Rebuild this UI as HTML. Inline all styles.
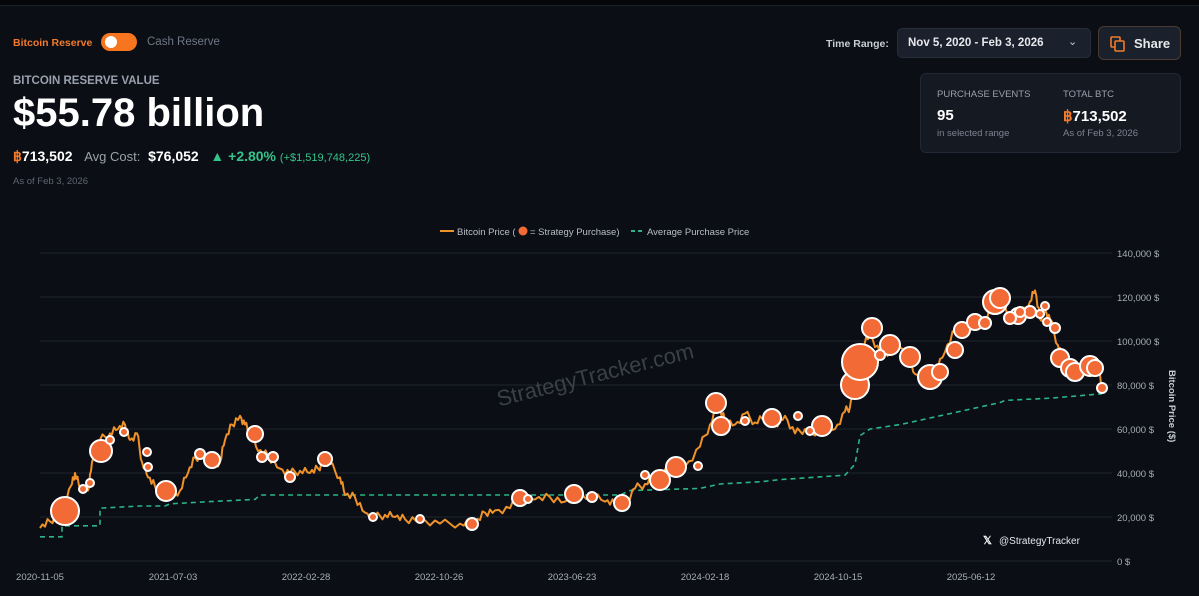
<!DOCTYPE html>
<html><head><meta charset="utf-8">
<style>
*{margin:0;padding:0;box-sizing:border-box}
body{width:1199px;height:596px;background:#0b0e15;font-family:"Liberation Sans",sans-serif;color:#fff;position:relative;overflow:hidden}
.topline{position:absolute;left:0;top:0;width:1199px;height:6px;background:#05070b;border-bottom:1px solid #1c212b}
.abs{position:absolute;white-space:nowrap}
.tog{position:absolute;left:101px;top:33px;width:36px;height:18px;border-radius:9px;background:#f7751f}
.tog:after{content:"";position:absolute;left:4px;top:3px;width:12px;height:12px;border-radius:50%;background:#fff}
.sel{position:absolute;left:897px;top:28px;width:194px;height:30px;border-radius:5px;background:#1b212c;border:1px solid #262d39}
.share{position:absolute;left:1098px;top:26px;width:83px;height:34px;border-radius:6px;background:#1b212c;border:1px solid #4a3a30}
.card{position:absolute;left:920px;top:73px;width:261px;height:80px;border-radius:6px;background:#141922;border:1px solid #222834}
</style></head><body>
<div class="topline"></div>
<div class="abs" style="left:13px;top:37px;font-size:10.5px;color:#f27a2a;font-weight:bold">Bitcoin Reserve</div>
<div class="tog"></div>
<div class="abs" style="left:147px;top:36px;font-size:11.5px;color:#6f7785">Cash Reserve</div>
<div class="abs" style="left:13px;top:75px;font-size:11.5px;color:#9aa1ad;font-weight:bold">BITCOIN RESERVE VALUE</div>
<div class="abs" style="left:13px;top:91px;font-size:40px;font-weight:bold;color:#fff">$55.78 billion</div>
<div class="abs" style="left:13px;top:148px;font-size:14px"><span style="color:#f27a2a;font-weight:bold">฿</span><b>713,502</b>&nbsp;&nbsp;&nbsp;<span style="color:#9aa1ad;font-size:13px">Avg Cost:</span>&nbsp;&nbsp;<b>$76,052</b>&nbsp;&nbsp;&nbsp;<b style="color:#34c48a">▲ +2.80%</b> <span style="color:#34c48a;font-size:11px">(+$1,519,748,225)</span></div>
<div class="abs" style="left:13px;top:176px;font-size:9.5px;color:#5f6673">As of Feb 3, 2026</div>

<div class="abs" style="left:826px;top:38px;font-size:10.5px;color:#c8ccd3;font-weight:bold">Time Range:</div>
<div class="sel"><div class="abs" style="left:10px;top:8px;font-size:11.5px;color:#e6e8ec;font-weight:bold">Nov 5, 2020 - Feb 3, 2026</div><div class="abs" style="left:170px;top:6px;font-size:11px;color:#c8ccd3">⌄</div></div>
<div class="share">
<svg class="abs" style="left:11px;top:9px" width="16" height="16" viewBox="0 0 16 16" fill="none" stroke="#f27a2a" stroke-width="1.6"><rect x="1" y="1" width="9" height="10" rx="1"/><rect x="5" y="5" width="9" height="10" rx="1" fill="#1b212c"/></svg>
<div class="abs" style="left:35px;top:9px;font-size:13px;font-weight:bold;color:#e6e8ec">Share</div></div>
<div class="card">
<div class="abs" style="left:16px;top:15px;font-size:9.5px;color:#9aa1ad">PURCHASE EVENTS</div>
<div class="abs" style="left:16px;top:33px;font-size:15px;font-weight:bold">95</div>
<div class="abs" style="left:16px;top:54px;font-size:9.5px;color:#7d8491">in selected range</div>
<div class="abs" style="left:142px;top:15px;font-size:9.5px;color:#9aa1ad">TOTAL BTC</div>
<div class="abs" style="left:142px;top:33px;font-size:15px;font-weight:bold"><span style="color:#f27a2a">฿</span>713,502</div>
<div class="abs" style="left:142px;top:54px;font-size:9.5px;color:#7d8491">As of Feb 3, 2026</div>
</div>

<svg id="ch" class="abs" style="left:0;top:0" width="1199" height="596" font-family="Liberation Sans, sans-serif"></svg>
<script>
var s='';
var Y=function(p){return 561-p*2.2};
s+='<line x1="440" y1="231" x2="454" y2="231" stroke="#f0922a" stroke-width="2"/><text x="457" y="235" font-size="9.5" fill="#b8bec8">Bitcoin Price (</text><circle cx="523" cy="231" r="4.5" fill="#f26a35"/><text x="530" y="235" font-size="9.5" fill="#b8bec8">= Strategy Purchase)</text><line x1="631" y1="231" x2="644" y2="231" stroke="#2bb587" stroke-width="2" stroke-dasharray="4,3"/><text x="647" y="235" font-size="9.5" fill="#b8bec8">Average Purchase Price</text>';
var labs=['0 $','20,000 $','40,000 $','60,000 $','80,000 $','100,000 $','120,000 $','140,000 $'];
for(var i=0;i<8;i++){var y=561-i*44;s+='<line x1="40" y1="'+y+'" x2="1112" y2="'+y+'" stroke="#1f2430" stroke-width="1"/><text x="1117" y="'+(y+4)+'" font-size="9.5" fill="#a8aeb8">'+labs[i]+'</text>';}
s+='<text transform="translate(1169,370) rotate(90)" font-size="9.5" fill="#c8ccd3" font-weight="bold">Bitcoin Price ($)</text>';
var dl=['2020-11-05','2021-07-03','2022-02-28','2022-10-26','2023-06-23','2024-02-18','2024-10-15','2025-06-12'];
for(i=0;i<8;i++){s+='<text x="'+(40+i*133)+'" y="580" text-anchor="middle" font-size="9.5" fill="#a8aeb8">'+dl[i]+'</text>';}
s+='<text transform="translate(597,382) rotate(-14)" text-anchor="middle" font-size="22" fill="#3a3f48">StrategyTracker.com</text>';
s+='<text x="983" y="544" font-size="11" fill="#fff" font-weight="bold">𝕏</text><text x="999" y="544" font-size="10" fill="#e6e8ec">@StrategyTracker</text>';
var avg=[[40,11],[62,11],[62,16],[100,16],[100,24],[140,25],[165,25],[170,26],[210,27],[255,28],[260,30],[340,30],[620,30],[630,32],[700,33],[720,35],[760,36],[780,37],[845,39],[855,44],[860,57],[870,60],[900,62],[950,67],[1000,72],[1005,73],[1050,74],[1102,76]];
s+='<polyline fill="none" stroke="#2bb587" stroke-width="1.6" stroke-dasharray="5,4" points="'+avg.map(function(p){return p[0]+','+Y(p[1])}).join(' ')+'"/>';
var pr=[[40,15],[50,18],[60,22],[72,35],[75,40],[80,33],[88,32],[92,45],[100,55],[110,58],[118,60],[125,62],[130,55],[137,58],[142,45],[148,38],[155,34],[162,31],[170,30],[180,32],[188,40],[195,47],[205,48],[212,44],[220,45],[225,55],[232,62],[240,66],[245,62],[250,58],[258,50],[268,48],[280,42],[290,40],[300,41],[310,40],[318,42],[325,46],[330,44],[340,38],[345,30],[355,29],[365,22],[375,20],[385,21],[395,20],[405,19],[420,19],[440,17],[460,17],[475,17],[485,22],[495,23],[510,24],[520,28],[535,28],[550,29],[565,27],[575,30],[590,30],[605,27],[615,26],[625,27],[635,33],[645,35],[655,38],[670,42],[685,43],[700,52],[710,62],[718,70],[725,64],[735,62],[745,67],[755,63],[765,65],[775,62],[785,66],[795,58],[805,60],[815,57],[825,62],[835,60],[845,68],[850,70],[855,90],[862,98],[870,103],[880,95],[890,95],[900,97],[908,92],[915,85],[925,83],[935,85],[945,95],[955,105],[965,108],[975,105],[985,110],[995,118],[1000,120],[1010,110],[1020,112],[1030,118],[1035,123],[1040,110],[1045,114],[1050,110],[1058,98],[1062,92],[1070,88],[1080,87],[1090,90],[1098,88],[1102,78]];
var pts=[];for(i=0;i<pr.length-1;i++){var a=pr[i],b=pr[i+1];for(var k=0;k<4;k++){var t=k/4;var x=a[0]+(b[0]-a[0])*t,p=a[1]+(b[1]-a[1])*t+(k?((i*7+k*13)%5-2)*0.9:0);pts.push(x.toFixed(1)+','+Y(p).toFixed(1));}}
pts.push('1102,'+Y(78));
s+='<polyline fill="none" stroke="#f0922a" stroke-width="2" stroke-linejoin="round" points="'+pts.join(' ')+'"/>';
var c=[[65,511,14],[101,451,11],[166,491,10],[212,460,8],[255,434,8],[325,459,7],[472,524,6],[520,498,8],[574,494,9],[622,503,8],[660,480,10],[676,467,10],[716,403,10],[721,426,9],[772,418,9],[822,426,10],[855,385,14],[860,362,18],[872,328,10],[890,345,10],[910,357,10],[930,377,12],[940,372,8],[955,350,8],[962,330,8],[975,322,8],[995,302,12],[1000,298,10],[1018,316,8],[1030,312,6],[1055,328,5],[1060,358,9],[1070,368,9],[1075,372,9],[1090,366,10],[1095,368,8],[1102,388,5],[110,440,4],[83,489,4],[90,483,4],[124,432,4],[147,452,4],[148,467,4],[200,454,5],[262,457,5],[273,457,5],[290,477,5],[373,517,4],[420,519,4],[528,499,4],[592,497,5],[645,475,4],[698,466,4],[745,421,4],[798,416,4],[810,431,4],[880,355,5],[1040,314,4],[1045,306,4],[1047,322,4],[1020,312,5],[1010,318,6],[985,323,6]];
c.forEach(function(q){s+='<circle cx="'+q[0]+'" cy="'+q[1]+'" r="'+q[2]+'" fill="#f26a35" stroke="#fff" stroke-width="2"/>';});
document.getElementById('ch').innerHTML=s;
</script>
</body></html>
